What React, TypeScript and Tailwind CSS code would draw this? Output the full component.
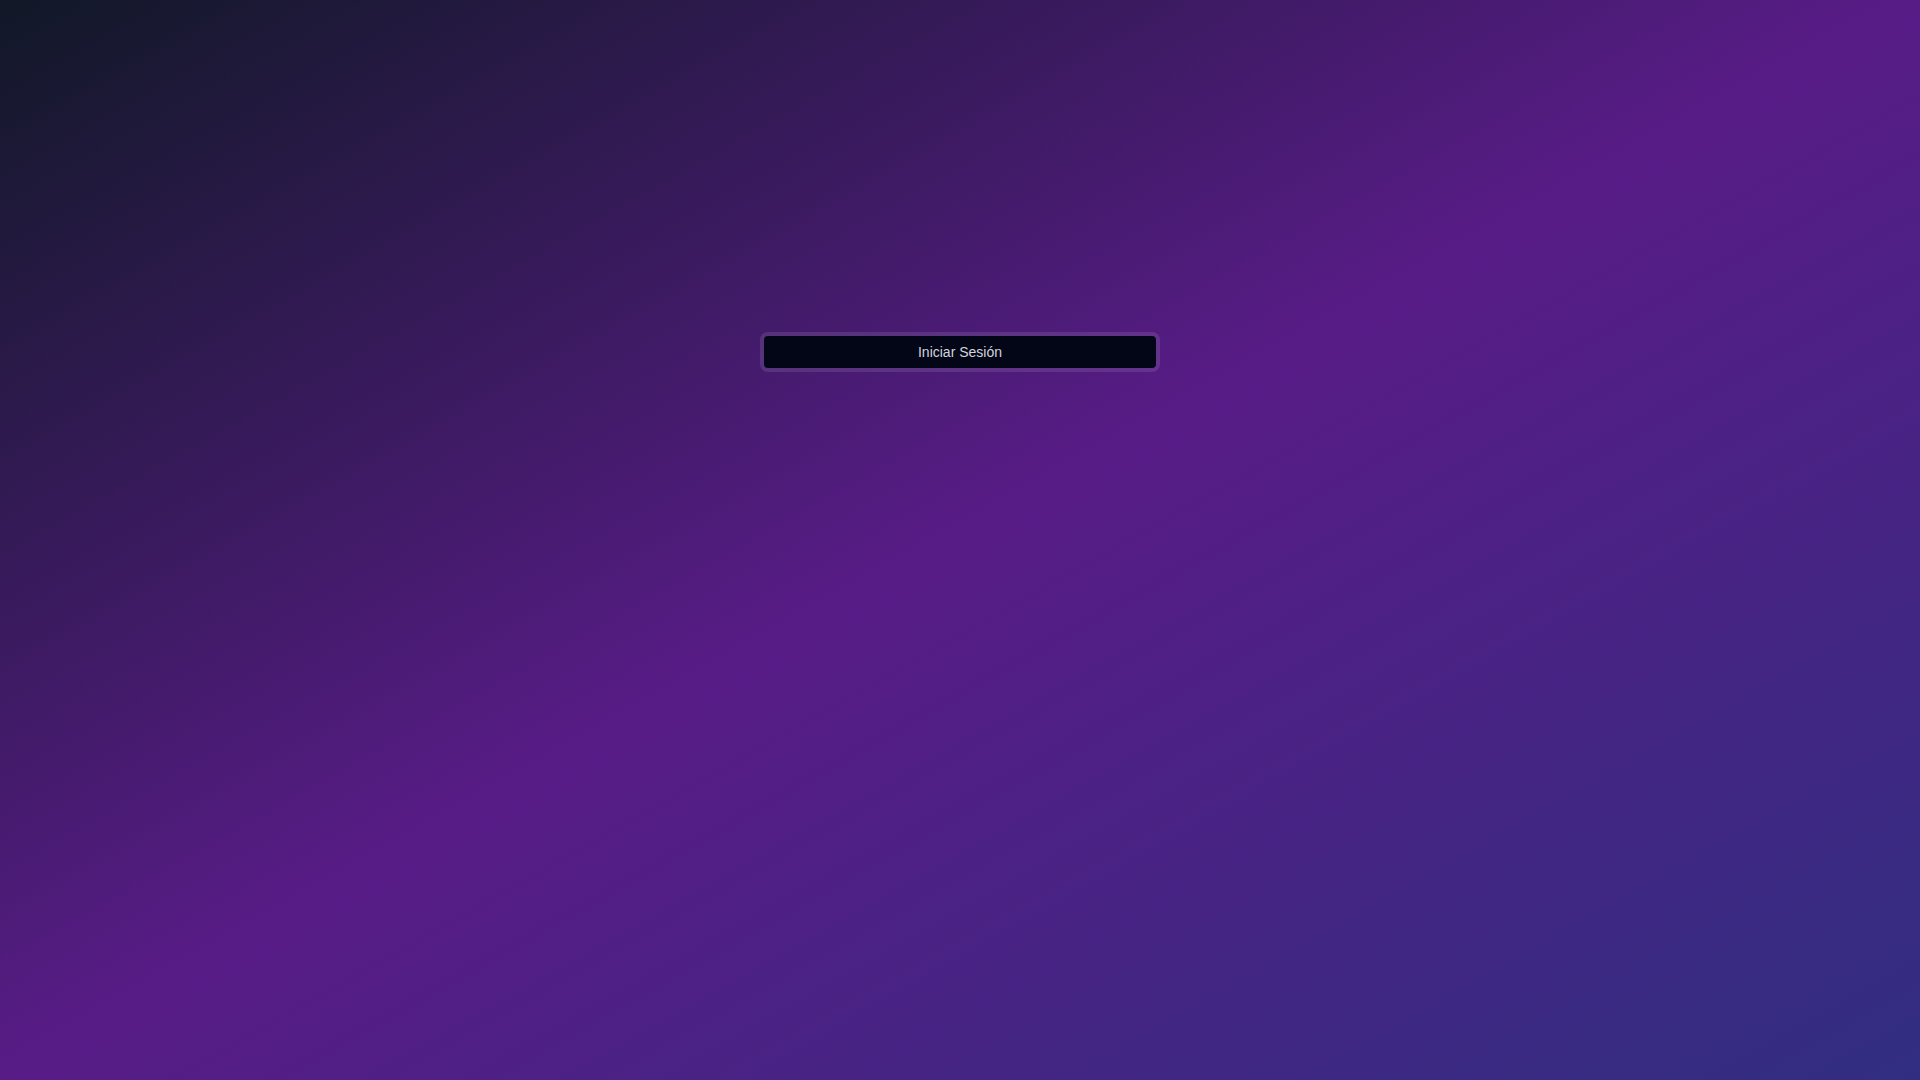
export default function App() {
  return (
    <div className="min-h-screen w-full bg-linear-to-br/srgb from-[#111827] via-[#581c87] to-[#312e81] flex justify-center pt-[336px]" style={{ fontFamily: '"Liberation Sans", Arial, sans-serif' }}>
      <button className="w-[392px] h-[32px] rounded bg-[#020617] text-[#d4d4dc] text-sm ring-4 ring-white/10">
        Iniciar Sesión
      </button>
    </div>
  );
}
